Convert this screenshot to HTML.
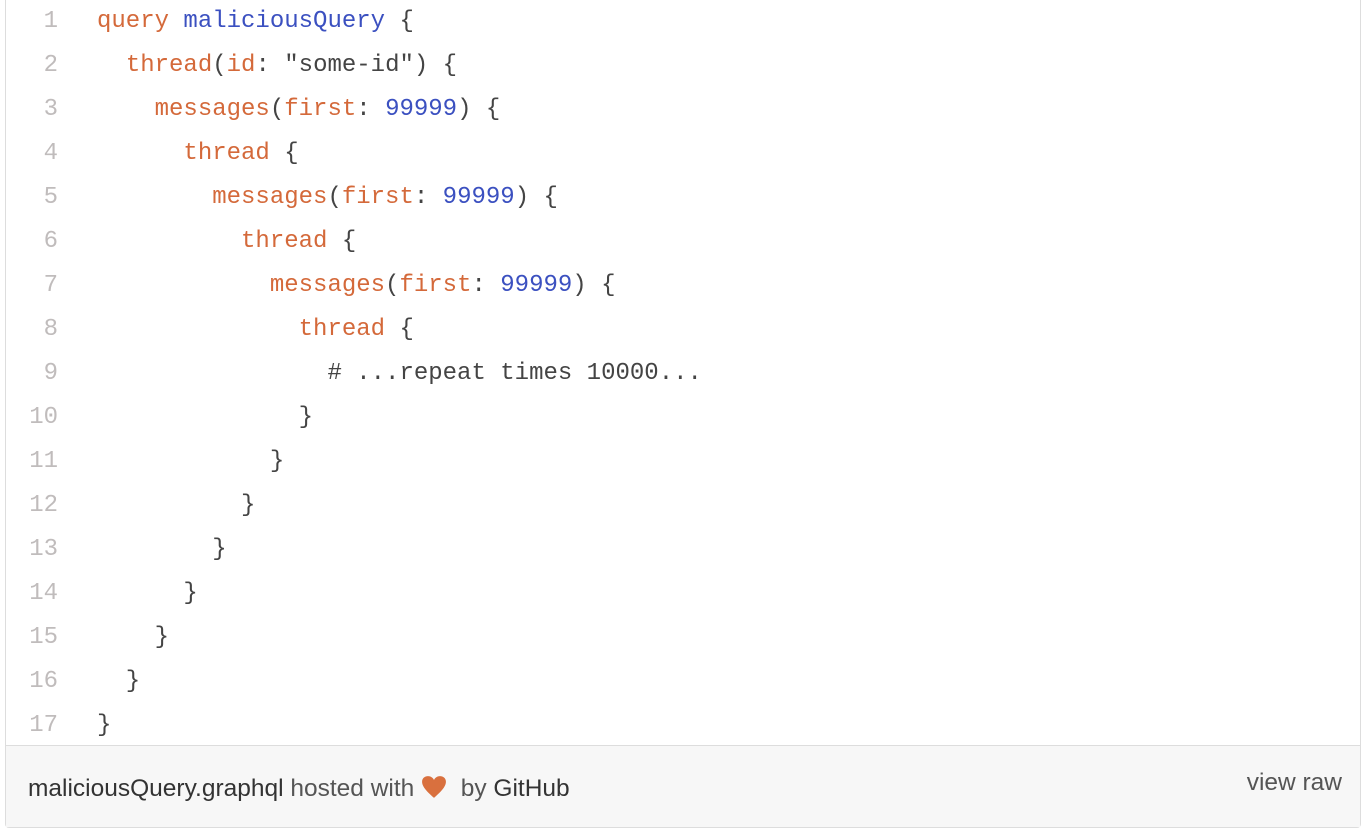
<!DOCTYPE html>
<html><head><style>
html,body{margin:0;padding:0;background:#fff;width:1364px;height:830px;overflow:hidden}
.box{position:absolute;left:5px;top:-2px;width:1356px;height:830px;border:1px solid #ddd;border-radius:0 0 4px 4px;box-sizing:border-box}
.code{position:absolute;left:0;top:3px;font-family:"Liberation Mono",monospace;font-size:24px;color:#444}
.ln{position:absolute;left:0;width:52px;text-align:right;color:#c0bcbc}
.l{position:absolute;left:91px;white-space:pre}
.o{color:#d4693a}.b{color:#3b50c0}
.foot{position:absolute;left:0;right:0;top:746px;bottom:0;background:#f7f7f7;border-top:1px solid #ddd;font-family:"Liberation Sans",sans-serif;font-size:24.5px;color:#555}
.foot .t{position:absolute;left:22px;top:29px;white-space:nowrap}
.foot b{font-weight:normal;color:#333}
.foot .r{position:absolute;right:18px;top:23px;color:#555}
</style></head><body>
<div class="box">
<div class="code">
<div class="ln" style="top:6px">1</div><div class="l" style="top:6px"><span class="o">query</span> <span class="b">maliciousQuery</span> {</div>
<div class="ln" style="top:50px">2</div><div class="l" style="top:50px">  <span class="o">thread</span>(<span class="o">id</span>: "some-id") {</div>
<div class="ln" style="top:94px">3</div><div class="l" style="top:94px">    <span class="o">messages</span>(<span class="o">first</span>: <span class="b">99999</span>) {</div>
<div class="ln" style="top:138px">4</div><div class="l" style="top:138px">      <span class="o">thread</span> {</div>
<div class="ln" style="top:182px">5</div><div class="l" style="top:182px">        <span class="o">messages</span>(<span class="o">first</span>: <span class="b">99999</span>) {</div>
<div class="ln" style="top:226px">6</div><div class="l" style="top:226px">          <span class="o">thread</span> {</div>
<div class="ln" style="top:270px">7</div><div class="l" style="top:270px">            <span class="o">messages</span>(<span class="o">first</span>: <span class="b">99999</span>) {</div>
<div class="ln" style="top:314px">8</div><div class="l" style="top:314px">              <span class="o">thread</span> {</div>
<div class="ln" style="top:358px">9</div><div class="l" style="top:358px">                # ...repeat times 10000...</div>
<div class="ln" style="top:402px">10</div><div class="l" style="top:402px">              }</div>
<div class="ln" style="top:446px">11</div><div class="l" style="top:446px">            }</div>
<div class="ln" style="top:490px">12</div><div class="l" style="top:490px">          }</div>
<div class="ln" style="top:534px">13</div><div class="l" style="top:534px">        }</div>
<div class="ln" style="top:578px">14</div><div class="l" style="top:578px">      }</div>
<div class="ln" style="top:622px">15</div><div class="l" style="top:622px">    }</div>
<div class="ln" style="top:666px">16</div><div class="l" style="top:666px">  }</div>
<div class="ln" style="top:710px">17</div><div class="l" style="top:710px">}</div>
</div>
<div class="foot">
<div class="t"><b>maliciousQuery.graphql</b> hosted with <svg width="26" height="24" viewBox="0 0 24 22" style="vertical-align:-3px"><path d="M12 21 C4 14 1 10 1 6 C1 3 3.5 1 6.5 1 C9 1 11 2.5 12 4.5 C13 2.5 15 1 17.5 1 C20.5 1 23 3 23 6 C23 10 20 14 12 21Z" fill="#d9703e"/></svg> &nbsp;by <b>GitHub</b></div>
<div class="r">view raw</div>
</div>
</div>
</body></html>
